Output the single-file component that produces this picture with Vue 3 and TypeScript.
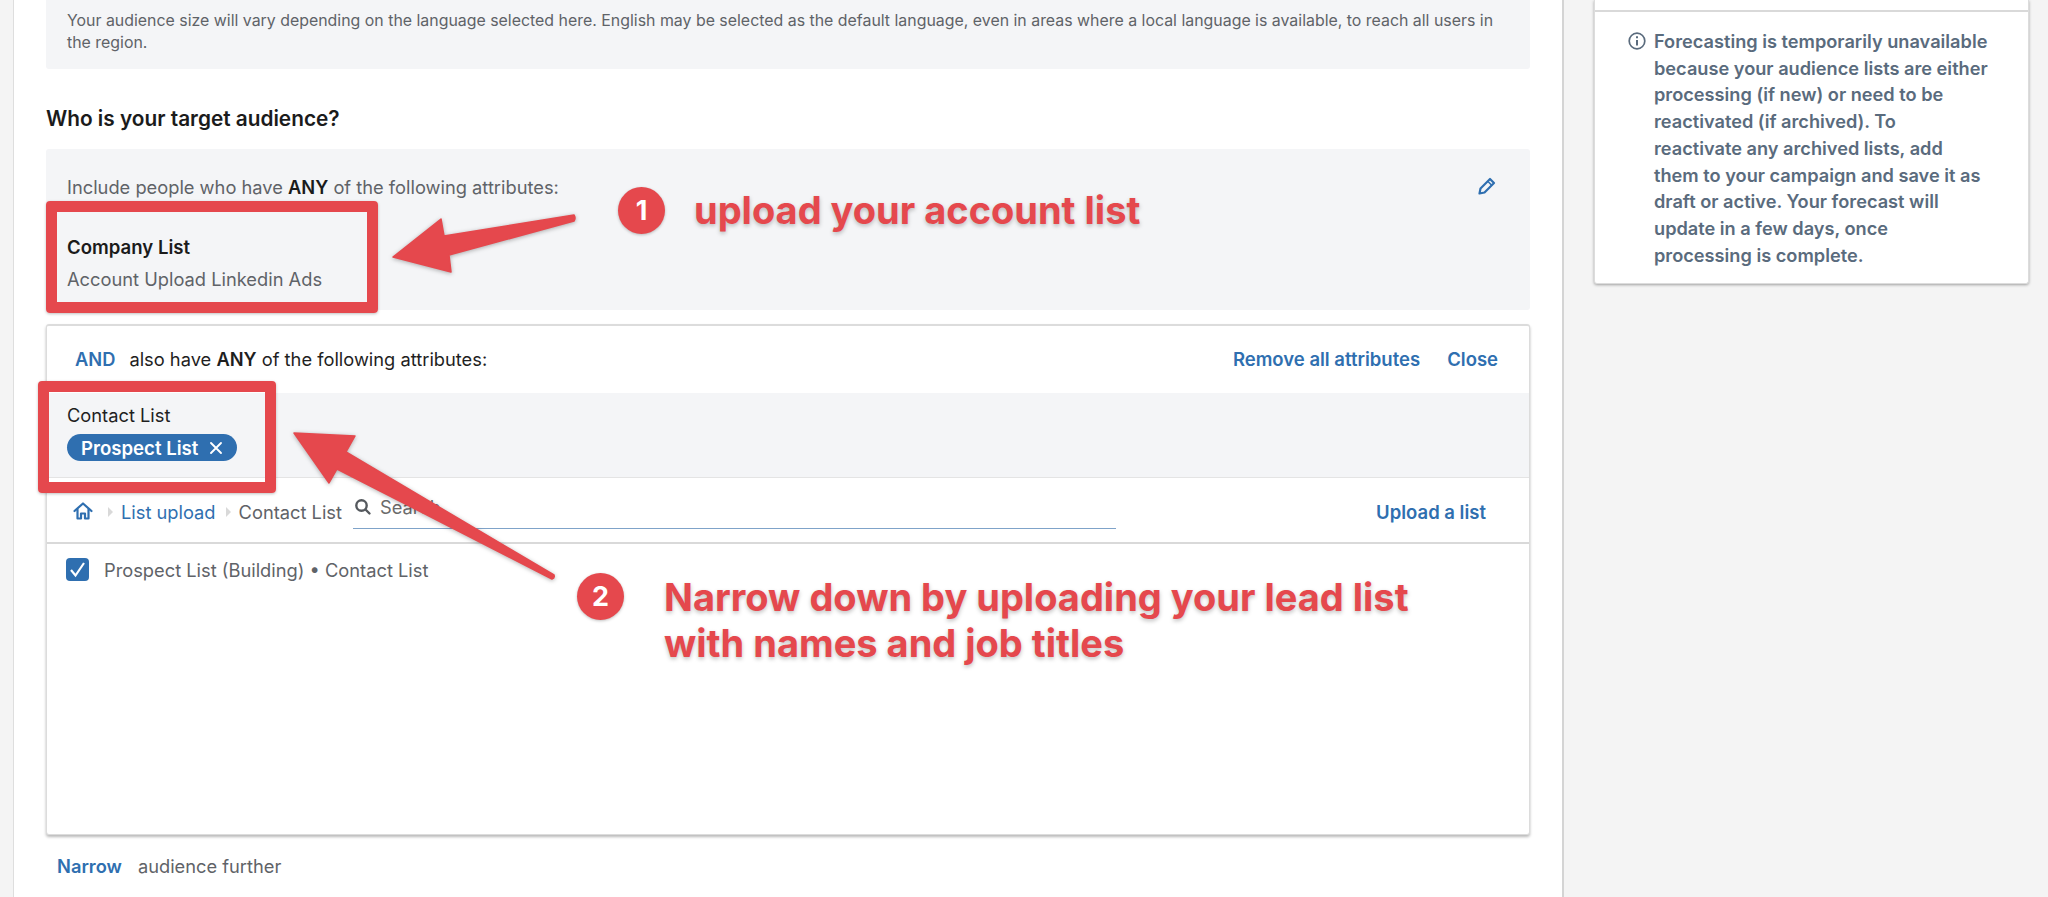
<script setup lang="ts">
const sidebarLines: string[] = [
  'Forecasting is temporarily unavailable',
  'because your audience lists are either',
  'processing (if new) or need to be',
  'reactivated (if archived). To',
  'reactivate any archived lists, add',
  'them to your campaign and save it as',
  'draft or active. Your forecast will',
  'update in a few days, once',
  'processing is complete.',
]
</script>

<template>
  <div class="page">
    <main class="main">
      <div class="note">
        Your audience size will vary depending on the language selected here. English may be selected as the default language, even in areas where a local language is available, to reach all users in the region.
      </div>
      <h2 class="title">Who is your target audience?</h2>
      <section class="include">
        <div class="include-head">
          <span>Include people who have <b>ANY</b> of the following attributes:</span>
          <svg class="pencil" width="20" height="20" viewBox="0 0 20 20" fill="none" stroke="#2f6fb0" stroke-width="2.2" stroke-linejoin="round">
            <path d="M2.5 17.5l1-5L13 3l4 4-9.500 9.500z" />
            <path d="M11 5.500l3.500 3.500" stroke-width="1.500" />
          </svg>
        </div>
        <div class="include-name">Company List</div>
        <div class="include-value">Account Upload Linkedin Ads</div>
      </section>
      <section class="card">
        <header class="card-head">
          <span class="and">AND</span>
          <span class="also">also have <b>ANY</b> of the following attributes:</span>
          <a class="link remove">Remove all attributes</a>
          <a class="link">Close</a>
        </header>
        <div class="selected">
          <div class="selected-name">Contact List</div>
          <span class="pill">Prospect List
            <svg width="14" height="14" viewBox="0 0 14 14" stroke="#fff" stroke-width="1.900" stroke-linecap="round"><path d="M2 2l10 10M12 2L2 12" /></svg>
          </span>
        </div>
        <div class="crumbs">
          <svg class="home" width="20" height="18" viewBox="0 0 20 18" fill="none" stroke="#2f6fb0" stroke-width="2.200" stroke-linejoin="round" stroke-linecap="round">
            <path d="M1.500 9L10 1.500 18.500 9" />
            <path d="M4.500 7.500V16.500h3.500v-5h4v5h3.500V7.500" />
          </svg>
          <i class="chev first"></i>
          <a class="crumb-link">List upload</a>
          <i class="chev second"></i>
          <span class="crumb">Contact List</span>
          <div class="search">
            <svg width="18" height="18" viewBox="0 0 18 18" fill="none" stroke="#55595e" stroke-width="2.400" stroke-linecap="round"><circle cx="7.500" cy="7.500" r="5.200" /><path d="M12 12l3.500 3.500" /></svg>
            <span>Search</span>
          </div>
          <a class="link upload">Upload a list</a>
        </div>
        <div class="list">
          <span class="check">
            <svg width="23" height="23" viewBox="0 0 23 23" fill="none" stroke="#fff" stroke-width="2.200"><path d="M5 12l4.500 5.500L18 5" /></svg>
          </span>
          <span>Prospect List (Building) • Contact List</span>
        </div>
      </section>
      <div class="narrow"><a class="narrow-link">Narrow</a><span>audience further</span></div>
    </main>

    <aside class="side">
      <div class="side-card">
        <div class="side-top"></div>
        <div class="side-body">
          <svg class="info" width="18" height="18" viewBox="0 0 18 18" fill="none" stroke="#5a6b7d" stroke-width="1.700">
            <circle cx="9" cy="9" r="7.800" />
            <path d="M9 8v5.500" stroke-width="2" /><path d="M9 4.300v2" stroke-width="2" />
          </svg>
          <div class="side-text">
            <div v-for="line in sidebarLines" :key="line">{{ line }}</div>
          </div>
        </div>
      </div>
    </aside>

    <!-- Annotation layer painted over the screenshot -->
    <div class="mark box-one"></div>
    <div class="mark box-two"></div>
    <svg class="arrows" width="2048" height="897" viewBox="0 0 2048 897" fill="#e5484d">
      <path d="M574 215q2 3 0 6L449 255l2 17-58-15 48-38 3 17z" stroke="#e5484d" stroke-width="1.500" stroke-linejoin="round" />
      <path d="M294 433l61 3-9 16 208 123q1 3-2 4L337 469l-8 14z" stroke="#e5484d" stroke-width="1.500" stroke-linejoin="round" />
    </svg>
    <span class="badge badge-one">1</span>
    <span class="badge badge-two">2</span>
    <p class="callout callout-one">upload your account list</p>
    <p class="callout callout-two">Narrow down by uploading your lead list<br />with names and job titles</p>
  </div>
</template>

<style>
html, body { margin: 0; padding: 0; overflow: hidden; }
</style>

<style scoped>
.page {
  position: relative;
  width: 2048px;
  height: 897px;
  overflow: hidden;
  display: flex;
  padding-left: 13px;
  box-sizing: border-box;
  background: #f4f4f4;
  font-family: Inter, "Liberation Sans", sans-serif;
  font-size: 18.300px;
  color: #1f1f1f;
}
.main {
  width: 1551px;
  box-sizing: border-box;
  flex: none;
  background: #fff;
  border-left: 1px solid #dedede;
  border-right: 2px solid #d4d4d4;
  padding: 0 32px;
}
.note {
  height: 69px;
  box-sizing: border-box;
  padding: 10px 21px 0;
  background: #f4f5f7;
  border-radius: 0 0 3px 3px;
  color: #5f6368;
  font-size: 15.900px;
  line-height: 22px;
}
.title {
  margin: 0;
  height: 80px;
  box-sizing: border-box;
  padding-top: 18px;
  display: flex;
  align-items: center;
  font-size: 20.800px;
  font-weight: 600;
  color: #1b1b1b;
}
.include {
  height: 161px;
  box-sizing: border-box;
  padding: 27px 21px 0;
  background: #f4f5f7;
  border-radius: 3px;
  color: #5f6368;
  line-height: 22px;
}
.include b { color: #1b1b1b; font-weight: 600; }
.include-head { display: flex; justify-content: space-between; align-items: center; padding-right: 12px; }
.pencil { margin-top: -2px; }
.include-name { margin-top: 38px; color: #1b1b1b; font-weight: 600; font-size: 18.600px; }
.include-value { margin-top: 10px; }
.card {
  margin-top: 14px;
  height: 511px;
  box-sizing: border-box;
  border: 1px solid #dcdcdc;
  border-top-width: 2px;
  border-radius: 3px;
  box-shadow: 0 2px 3px rgba(0, 0, 0, .28);
  background: #fff;
  display: flex;
  flex-direction: column;
}
.card-head {
  height: 67px;
  flex: none;
  display: flex;
  align-items: center;
  padding: 0 31px 2px 28px;
  box-sizing: border-box;
}
.and { color: #2f6fb0; font-weight: 600; margin-right: 14px; }
.also b { font-weight: 600; }
.also { flex: 1; }
.link { color: #2f6fb0; font-weight: 600; font-size: 18.500px; }
.remove { margin-right: 27px; }
.selected {
  height: 85px;
  flex: none;
  box-sizing: border-box;
  background: #f4f5f7;
  border-bottom: 1px solid #e4e4e4;
  padding: 11px 20px 0;
}
.selected-name { line-height: 22px; }
.pill {
  margin-top: 8px;
  width: 170px;
  height: 27px;
  box-sizing: border-box;
  border-radius: 14px;
  background: #2f6fb0;
  color: #fff;
  font-weight: 600;
  font-size: 18.600px;
  display: flex;
  align-items: center;
  gap: 11px;
  padding-left: 14px;
}
.crumbs {
  height: 66px;
  flex: none;
  box-sizing: border-box;
  border-bottom: 2px solid #d9d9d9;
  display: flex;
  align-items: center;
  padding: 0 43px 0 26px;
}
.home { flex: none; margin-top: 1px; }
.chev {
  width: 0;
  height: 0;
  border-left: 5px solid #d9d9d9;
  border-top: 5px solid transparent;
  border-bottom: 5px solid transparent;
  margin: 3px 8px 0 10px;
}
.chev.first { margin-left: 15px; }
.crumb-link { color: #2f6fb0; margin-top: 3px; }
.crumb { color: #5f6368; margin-top: 3px; }
.search {
  align-self: flex-start;
  margin: 7px 0 0 11px;
  width: 763px;
  height: 44px;
  box-sizing: border-box;
  border-bottom: 1px solid #7fa3c9;
  display: flex;
  align-items: center;
  gap: 8px;
  padding: 0 0 0 1px;
  color: #6b6b6b;
}
.upload { margin-left: auto; margin-top: 4px; }
.list {
  display: flex;
  align-items: center;
  gap: 15px;
  padding: 14px 19px 0;
  color: #5f6368;
}
.check {
  width: 23px;
  height: 23px;
  border-radius: 4px;
  background: #2f6fb0;
  display: block;
}
.check svg { display: block; }
.narrow {
  margin-top: 20px;
  display: flex;
  gap: 16px;
  padding-left: 11px;
  color: #5f6368;
  line-height: 22px;
}
.narrow-link { color: #2f6fb0; font-weight: 600; }
.side {
  padding-left: 30px;
  width: 435px;
  flex: none;
}
.side-card {
  height: 284px;
  box-sizing: border-box;
  background: #fff;
  border: 1px solid #dcdcdc;
  border-top: 0;
  border-radius: 0 0 3px 3px;
  box-shadow: 0 1px 3px rgba(0, 0, 0, .35);
}
.side-top { height: 10px; border-bottom: 2px solid #d9d9d9; }
.side-body {
  display: flex;
  gap: 8px;
  padding: 16px 20px 0 33px;
  color: #5a6b7d;
  font-size: 18.200px;
  font-weight: 600;
  line-height: 26.700px;
}
.info { flex: none; margin-top: 4px; }
.side-text { white-space: nowrap; }

.mark {
  position: absolute;
  box-sizing: border-box;
  border: 11px solid #e5484d;
  border-radius: 4px;
  box-shadow: 0 1px 3px rgba(0, 0, 0, .25);
}
.box-one { left: 46px; top: 201px; width: 332px; height: 112px; }
.box-two { left: 38px; top: 381px; width: 238px; height: 112px; }
.arrows { position: absolute; left: 0; top: 0; filter: drop-shadow(0 1px 2px rgba(0, 0, 0, .3)); }
.badge {
  position: absolute;
  width: 47px;
  height: 47px;
  border-radius: 50%;
  background: #e5484d;
  color: #fff;
  font-size: 27px;
  font-weight: 700;
  display: flex;
  align-items: center;
  justify-content: center;
  box-shadow: 0 1px 3px rgba(0, 0, 0, .25);
}
.badge-one { left: 618px; top: 187px; }
.badge-two { left: 577px; top: 573px; }
.callout {
  position: absolute;
  margin: 0;
  color: #e5484d;
  font-size: 38px;
  font-weight: 700;
  line-height: 46px;
  white-space: nowrap;
  text-shadow: 0 2px 4px rgba(0, 0, 0, .25);
}
.callout-one { left: 694px; top: 187px; }
.callout-two { left: 664px; top: 574px; }
</style>
